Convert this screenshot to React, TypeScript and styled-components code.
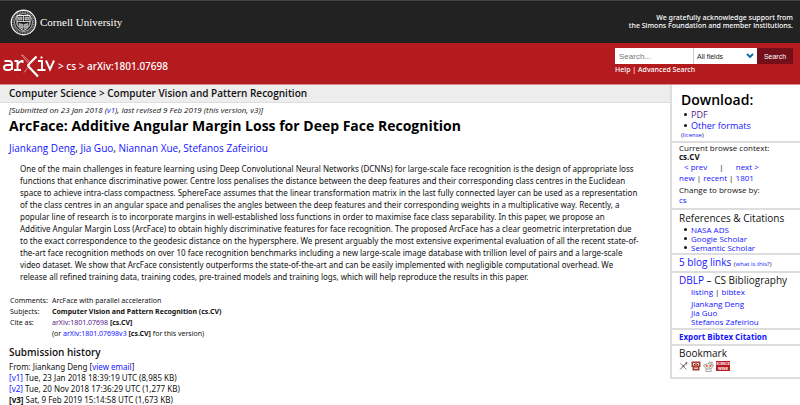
import React from "react";
import styled, { createGlobalStyle } from "styled-components";

const GlobalStyle = createGlobalStyle`
  * { box-sizing: border-box; }
  html { overflow: hidden; }
  body {
    margin: 0;
    background: #fff;
    color: #111;
    font-family: "Open Sans", "Noto Sans", sans-serif;
    font-size: 9px;
    line-height: 12px;
  }
  h1, h2, h3, p, ul, ol, dl, dd { margin: 0; padding: 0; }
`;

const Link = styled.a<{ $visited?: boolean }>`
  color: ${(p) => (p.$visited ? "#551a8b" : "#1414ff")};
  text-decoration: none;
`;

const CornellBar = styled.header`
  display: flex;
  align-items: center;
  justify-content: space-between;
  height: 43px;
  padding: 0 7px 0 10px;
  border-top: 1px solid #42434a;
  background: #222;
  color: #fff;
`;

const CornellBrand = styled.a`
  display: flex;
  align-items: center;
  gap: 3px;
  color: #fff;
  text-decoration: none;
  font: 11px/16px "Liberation Serif", serif;
`;

const Support = styled.p`
  font-family: "Noto Sans", sans-serif;
  font-size: 7px;
  line-height: 8px;
  font-weight: 500;
  text-align: right;
`;

const RedBar = styled.div`
  display: flex;
  justify-content: space-between;
  height: 42px;
  padding: 5px 7px 0 3px;
  border-bottom: 1px solid #d58b8d;
  background: #b31b1f;
  color: #fff;
`;

const Crumbs = styled.nav`
  display: flex;
  align-items: center;
  gap: 3px;
  height: 36px;
  font-family: "Noto Sans", sans-serif;
  font-size: 10px;
  line-height: 16px;
  font-weight: 500;
  a { color: #fff; text-decoration: none; }
  svg { display: block; }
`;

const SearchArea = styled.form`
  width: 178px;
  font-family: "Noto Sans", sans-serif;
  font-size: 7px;
  line-height: 12px;
  font-weight: 500;
  a { color: #fff; text-decoration: none; }
`;

const SearchRow = styled.div`
  display: grid;
  grid-template-columns: 79px 63px 36px;
  height: 16px;
`;

const SearchInput = styled.input`
  min-width: 0;
  padding: 0 4px;
  border: 0;
  border-right: 1px solid #ccc;
  border-radius: 0;
  background: #fff;
  font: 8px "Liberation Sans", sans-serif;
  &::placeholder { color: #777; opacity: 1; }
`;

const SelectBox = styled.div`
  position: relative;
  display: grid;
  svg { position: absolute; right: 3px; top: 5px; pointer-events: none; }
`;

const FieldSelect = styled.select`
  min-width: 0;
  padding: 0 3px;
  border: 0;
  border-radius: 0;
  background: #fff;
  color: #222;
  appearance: none;
  font: 7px "Liberation Sans", sans-serif;
`;

const SearchButton = styled.button`
  padding: 0;
  border: 0;
  background: #74101a;
  color: #fff;
  font: 7px "Liberation Sans", sans-serif;
`;

const Page = styled.div`
  display: grid;
  grid-template-columns: minmax(0, 1fr) 130px;
  align-items: start;
`;

const SubjectBar = styled.div`
  height: 18px;
  padding: 0 9px;
  border-bottom: 1px solid #ddd;
  background: #ededed;
  font-size: 10px;
  line-height: 17px;
  font-weight: 600;
`;

const Dateline = styled.p`
  padding: 2px 9px 0;
  font-size: 8px;
  line-height: 10px;
  font-style: italic;
`;

const Title = styled.h1`
  padding: 2px 9px 0;
  color: #000;
  font-size: 14px;
  line-height: 18px;
  font-weight: 700;
`;

const Authors = styled.p`
  padding: 6px 9px 0;
  font-size: 10px;
  line-height: 14px;
`;

const Abstract = styled.p`
  padding: 8px 20px 0;
  font-family: "Noto Sans", sans-serif;
  font-size: 8px;
  line-height: 12px;
  white-space: nowrap;
`;

const Meta = styled.table`
  margin: 12px 0 0 10px;
  border-collapse: collapse;
  font-family: "Noto Sans", sans-serif;
  font-size: 7px;
  line-height: 11px;
  th { width: 42px; padding: 0; text-align: left; font-weight: 400; }
  td { padding: 0; }
`;

const History = styled.section`
  padding: 5px 9px 0;
  font-family: "Noto Sans", sans-serif;
  font-size: 8px;
  line-height: 11px;
  h2 {
    padding-bottom: 1px;
    font-family: "Open Sans", sans-serif;
    font-size: 10px;
    line-height: 16px;
    font-weight: 600;
  }
`;

const Sidebar = styled.aside`
  border: 2px solid #ddd;
  border-top: 0;
  border-right: 0;
`;

const Panel = styled.section`
  padding: 0 0 0 7px;
  font-size: 8px;
  & + & { border-top: 2px solid #ddd; }
`;

const DownloadPanel = styled(Panel)`
  padding: 6px 0 2px 9px;
`;

const ContextPanel = styled(Panel)`
  padding-bottom: 4px;
  border-top: 2px solid #ddd;
`;

const DownloadTitle = styled.h2`
  color: #000;
  font-size: 14px;
  line-height: 18px;
  font-weight: 600;
`;

const PanelTitle = styled.h3<{ $compact?: boolean }>`
  font-size: ${(p) => (p.$compact ? 8 : 10)}px;
  line-height: 14px;
  font-weight: 400;
`;

const Bullets = styled.ul<{ $large?: boolean }>`
  padding-left: ${(p) => (p.$large ? 10 : 12)}px;
  font-size: ${(p) => (p.$large ? 9 : 8)}px;
  line-height: ${(p) => (p.$large ? 11 : 9)}px;
  list-style: none;
  li { display: flex; align-items: center; }
  li::before {
    content: "";
    width: 3px;
    height: 3px;
    margin-left: -7px;
    margin-right: 4px;
    border-radius: 50%;
    background: #111;
  }
`;

const ReferencesPanel = styled(Panel)`
  padding: 1px 0 1px 7px;
`;

const Small = styled.small`
  display: block;
  font-size: 6px;
  line-height: 8px;
`;

const InlineSmall = styled.small`
  font-size: 6px;
`;

const PrevNext = styled.div`
  display: flex;
  gap: 12px;
  padding: 1px 5px 0;
  line-height: 10px;
`;

const Line = styled.p<{ $top?: number }>`
  padding-top: ${(p) => p.$top ?? 0}px;
  line-height: 9px;
`;

const Indented = styled.div`
  padding: 0 0 2px 12px;
`;

const Icons = styled.div`
  display: flex;
  align-items: center;
  gap: 2px;
  height: 12px;
  margin-bottom: 5px;
`;

const Seal = () => (
  <svg width="27" height="27" viewBox="0 0 54 54" fill="none" stroke="#eee" aria-hidden="true">
    <circle cx="27" cy="27" r="24.5" strokeWidth="2.6" />
    <circle cx="27" cy="27" r="21" strokeWidth="3.5" stroke="#999" strokeDasharray="1.6 1.8" />
    <circle cx="27" cy="27" r="18" strokeWidth="1.4" />
    <path d="M14 13h26v15c0 7-5 11-13 15-8-4-13-8-13-15z" strokeWidth="2" />
    <path d="M14 25h26M27 13v12" strokeWidth="1.6" />
    <path d="M17 16h7v6h-7zM30 16h7v6h-7z" fill="#888" strokeWidth="1" />
    <path d="M18 29l8 2v8l-8-3zM36 29l-8 2v8l8-3z" fill="#999" strokeWidth="1" />
  </svg>
);

const ArxivLogo = () => (
  <svg width="52" height="24" viewBox="0 0 104 48" fill="none" stroke="#fff" strokeWidth="3.8" role="img" aria-label="arXiv">
    <path d="M3 14h9c4 0 6 2 6 6v12M18 22H8c-4 0-6 2-6 5s2 5 6 5h3c4 0 7-2 7-5" />
    <path d="M23 14h6v18M22 32h14M29 22c2-5 5-8 10-8v4" />
    <path d="M67 5L52 20c-2 2-2 4 0 6l18 19" strokeWidth="4.5" />
    <path d="M50 27L42 37M37 2l15 18M37 2c3 0 5 2 6 3l12 13" stroke="#e2979a" strokeWidth="1.8" />
    <path d="M70 14h8v18M69 32h16M77 5v4" />
    <path d="M86 13l8 18 8-18" />
  </svg>
);

const Chevron = () => (
  <svg width="8" height="6" viewBox="0 0 8 6" fill="none" stroke="#0868ac" strokeWidth="1.8" aria-hidden="true">
    <path d="M1 1l3 3 3-3" />
  </svg>
);

const CiteULikeIcon = () => (
  <svg width="10" height="10" viewBox="0 0 20 20" fill="none" aria-hidden="true">
    <path d="M2 17L15 3M3 5l12 12" stroke="#888" strokeWidth="2" />
    <path d="M2 5l6 4M8 12l-5 4M12 7l4 1" stroke="#c5a0a0" strokeWidth="2" />
    <circle cx="15" cy="4" r="2" fill="#777" />
    <circle cx="9" cy="10" r="2" fill="#5d5255" />
  </svg>
);

const BibsonomyIcon = () => (
  <svg width="10" height="10" viewBox="0 0 20 20" aria-hidden="true">
    <path d="M1 1h18v11h-2v7H3v-7H1z" fill="#a43d2d" />
    <path d="M4 4h5v5H4zM11 4h5v5h-5z" fill="#f3d7c8" />
    <path d="M6 6h2v2H6zM12 6h2v2h-2z" fill="#412" />
    <path d="M6 13h8v3H6z" fill="#eac3b5" />
  </svg>
);

const RedditIcon = () => (
  <svg width="11" height="11" viewBox="0 0 20 20" fill="#fff" stroke="#8e8e8e" strokeWidth="1.4" aria-hidden="true">
    <path d="M10 6l1-4 4 1M6 14l-1 5h10l-1-5" />
    <circle cx="3" cy="8" r="2" />
    <circle cx="17" cy="8" r="2" />
    <ellipse cx="10" cy="10" rx="7" ry="5" />
    <circle cx="16" cy="3" r="1.4" />
    <circle cx="7" cy="9" r="1.8" fill="#f0441d" stroke="none" />
    <circle cx="13" cy="9" r="1.8" fill="#f0441d" stroke="none" />
    <path d="M7 12q3 2 6 0" />
  </svg>
);

const ScienceWiseIcon = () => (
  <svg width="14" height="10" viewBox="0 0 28 20" aria-hidden="true">
    <path d="M0 0h28v20H0z" fill="#b71922" />
    <g fill="#fff" fontFamily="Liberation Sans, sans-serif" fontWeight="700" textAnchor="middle">
      <text x="14" y="8" fontSize="6">SCIENCE</text>
      <text x="14" y="17" fontSize="8">WISE</text>
    </g>
  </svg>
);

const abstractLines = [
  "One of the main challenges in feature learning using Deep Convolutional Neural Networks (DCNNs) for large-scale face recognition is the design of appropriate loss",
  "functions that enhance discriminative power. Centre loss penalises the distance between the deep features and their corresponding class centres in the Euclidean",
  "space to achieve intra-class compactness. SphereFace assumes that the linear transformation matrix in the last fully connected layer can be used as a representation",
  "of the class centres in an angular space and penalises the angles between the deep features and their corresponding weights in a multiplicative way. Recently, a",
  "popular line of research is to incorporate margins in well-established loss functions in order to maximise face class separability. In this paper, we propose an",
  "Additive Angular Margin Loss (ArcFace) to obtain highly discriminative features for face recognition. The proposed ArcFace has a clear geometric interpretation due",
  "to the exact correspondence to the geodesic distance on the hypersphere. We present arguably the most extensive experimental evaluation of all the recent state-of-",
  "the-art face recognition methods on over 10 face recognition benchmarks including a new large-scale image database with trillion level of pairs and a large-scale",
  "video dataset. We show that ArcFace consistently outperforms the state-of-the-art and can be easily implemented with negligible computational overhead. We",
  "release all refined training data, training codes, pre-trained models and training logs, which will help reproduce the results in this paper.",
];

const authors = ["Jiankang Deng", "Jia Guo", "Niannan Xue", "Stefanos Zafeiriou"];

export default function App() {
  return (
    <>
      <GlobalStyle />
      <CornellBar>
        <CornellBrand href="#cornell"><Seal />Cornell University</CornellBrand>
        <Support>We gratefully acknowledge support from<br />the Simons Foundation and member institutions.</Support>
      </CornellBar>
      <RedBar>
        <Crumbs>
          <a href="#home"><ArxivLogo /></a>
          <span>&gt; <a href="#cs">cs</a> &gt; arXiv:1801.07698</span>
        </Crumbs>
        <SearchArea>
          <SearchRow>
            <SearchInput aria-label="Search term" placeholder="Search..." />
            <SelectBox>
              <FieldSelect aria-label="Search field"><option>All fields</option></FieldSelect>
              <Chevron />
            </SelectBox>
            <SearchButton type="button">Search</SearchButton>
          </SearchRow>
          <a href="#help">Help</a> | <a href="#advanced">Advanced Search</a>
        </SearchArea>
      </RedBar>
      <Page>
        <main>
          <SubjectBar>Computer Science &gt; Computer Vision and Pattern Recognition</SubjectBar>
          <Dateline>[Submitted on 23 Jan 2018 (<Link href="#v1">v1</Link>), last revised 9 Feb 2019 (this version, v3)]</Dateline>
          <Title>ArcFace: Additive Angular Margin Loss for Deep Face Recognition</Title>
          <Authors>
            {authors.map((name, i) => (
              <React.Fragment key={name}>{i > 0 && ", "}<Link href="#author">{name}</Link></React.Fragment>
            ))}
          </Authors>
          <Abstract>
            {abstractLines.map((line) => <React.Fragment key={line}>{line}<br /></React.Fragment>)}
          </Abstract>
          <Meta>
            <tbody>
              <tr><th scope="row">Comments:</th><td>ArcFace with parallel acceleration</td></tr>
              <tr><th scope="row">Subjects:</th><td><b>Computer Vision and Pattern Recognition (cs.CV)</b></td></tr>
              <tr><th scope="row">Cite as:</th><td><Link $visited href="#abs">arXiv:1801.07698</Link> <b>[cs.CV]</b></td></tr>
              <tr><th /><td>(or <Link href="#v3">arXiv:1801.07698v3</Link> <b>[cs.CV]</b> for this version)</td></tr>
            </tbody>
          </Meta>
          <History>
            <h2>Submission history</h2>
            <p>From: Jiankang Deng [<Link href="#email">view email</Link>]</p>
            <p><Link href="#v1">[v1]</Link> Tue, 23 Jan 2018 18:39:19 UTC (8,985 KB)</p>
            <p><Link href="#v2">[v2]</Link> Tue, 20 Nov 2018 17:36:29 UTC (1,277 KB)</p>
            <p><b>[v3]</b> Sat, 9 Feb 2019 15:14:58 UTC (1,673 KB)</p>
          </History>
        </main>
        <Sidebar>
          <DownloadPanel>
            <DownloadTitle>Download:</DownloadTitle>
            <Bullets $large>
              <li><Link $visited href="#pdf">PDF</Link></li>
              <li><Link href="#formats">Other formats</Link></li>
            </Bullets>
            <Small>(<Link href="#license">license</Link>)</Small>
          </DownloadPanel>
          <ContextPanel>
            <Line>Current browse context:</Line>
            <Line><b>cs.CV</b></Line>
            <PrevNext><Link href="#prev">&lt; prev</Link><span>|</span><Link href="#next">next &gt;</Link></PrevNext>
            <Line $top={1}><Link href="#new">new</Link> | <Link href="#recent">recent</Link> | <Link href="#1801">1801</Link></Line>
            <Line $top={3}>Change to browse by:</Line>
            <Line $top={1}><Link href="#cs">cs</Link></Line>
          </ContextPanel>
          <ReferencesPanel>
            <PanelTitle>References &amp; Citations</PanelTitle>
            <Bullets>
              <li><Link href="#nasa">NASA ADS</Link></li>
              <li><Link href="#google">Google Scholar</Link></li>
              <li><Link href="#semantic">Semantic Scholar</Link></li>
            </Bullets>
          </ReferencesPanel>
          <Panel>
            <PanelTitle><Link href="#blogs">5 blog links</Link> <InlineSmall>(<Link href="#what">what is this?</Link>)</InlineSmall></PanelTitle>
          </Panel>
          <Panel>
            <PanelTitle><Link href="#dblp">DBLP</Link> – CS Bibliography</PanelTitle>
            <Indented>
              <Line><Link href="#listing">listing</Link> | <Link href="#bibtex">bibtex</Link></Line>
              <Line $top={3}><Link href="#deng">Jiankang Deng</Link></Line>
              <Line><Link href="#guo">Jia Guo</Link></Line>
              <Line><Link href="#zafeiriou">Stefanos Zafeiriou</Link></Line>
            </Indented>
          </Panel>
          <Panel>
            <PanelTitle $compact><Link href="#export"><b>Export Bibtex Citation</b></Link></PanelTitle>
          </Panel>
          <Panel>
            <PanelTitle>Bookmark</PanelTitle>
            <Icons><CiteULikeIcon /><BibsonomyIcon /><RedditIcon /><ScienceWiseIcon /></Icons>
          </Panel>
        </Sidebar>
      </Page>
    </>
  );
}
